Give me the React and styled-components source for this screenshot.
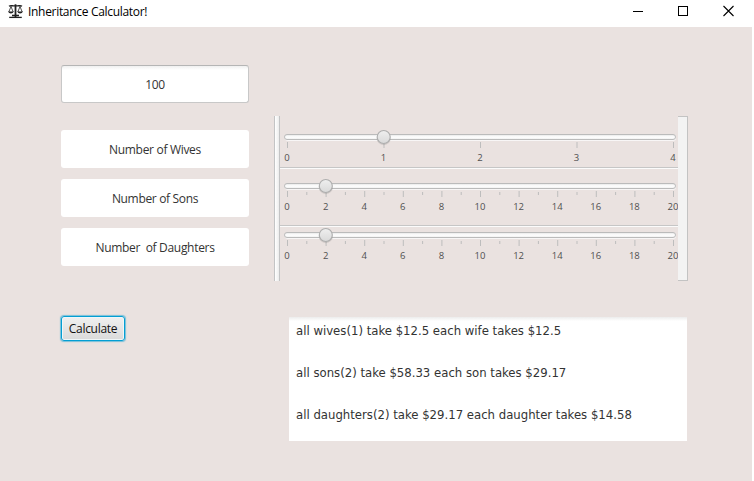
import React from 'react';
import styled, { createGlobalStyle, css } from 'styled-components';

const Global = createGlobalStyle`
  * { box-sizing: border-box; }
  html, body { margin: 0; padding: 0; background: #fff; overflow: hidden; }
`;

const Window = styled.div`
  width: 754px;
  height: 481px;
  display: flex;
  flex-direction: column;
  background: #fff;
  font-family: 'Open Sans', 'Noto Sans', sans-serif;
  font-size: 12px;
  color: #333;
`;

const TitleBar = styled.header`
  height: 27px;
  display: flex;
  align-items: flex-start;
  padding: 4px 20px 0 8px;
  color: #000;
`;

const Title = styled.span`
  margin-left: 5px;
  line-height: 16px;
  letter-spacing: ${(p) => p.$spacing}px;
  flex: 1;
  white-space: nowrap;
`;

const Controls = styled.div`
  display: flex;
  gap: 35px;
  padding-top: 1px;
  svg { display: block; }
`;

const Scene = styled.main`
  width: 752px;
  flex: 1;
  display: grid;
  grid-template-columns: 188px 414px;
  grid-template-rows: 51px 165px 1fr;
  column-gap: 25px;
  padding: 38px 0 0 61px;
  background: #eae2e0;
`;

const Field = styled.div`
  height: 38px;
  display: flex;
  align-items: center;
  justify-content: center;
  padding-top: 1px;
  border-radius: 3px;
  background: #fff;
  white-space: pre;
  letter-spacing: ${(p) => p.$spacing || 0}px;
  ${(p) =>
    p.$bordered &&
    css`
      border: 1px solid #c8c8c8;
      border-top-color: #b5b5b5;
      background: linear-gradient(#f0f0f0, #fff 4px);
    `}
`;

const FieldStack = styled.div`
  grid-column: 1;
  grid-row: 2;
  display: flex;
  flex-direction: column;
  gap: 11px;
  padding-top: 14px;
`;

const SplitPane = styled.section`
  grid-column: 2;
  grid-row: 2;
  display: flex;
  height: 165px;
`;

const LeftDivider = styled.div`
  width: 6px;
  border: solid #c3c4c5;
  border-width: 0 1px;
  background: linear-gradient(90deg, #fff, #ececec);
`;

const RightPanel = styled.div`
  width: 10px;
  border: 1px solid #c3c3c3;
  border-left: 0;
  background: #f3f3f3;
`;

const Sliders = styled.div`
  width: 398px;
  overflow: hidden;
`;

const SliderPane = styled.div`
  height: ${(p) => p.$height}px;
  padding: ${(p) => p.$top}px 0 0 4px;
`;

const PaneDivider = styled.div`
  height: 2px;
  background: #fbfbfb;
  border-top: 1px solid #c6c6c6;
`;

const SliderArt = styled.svg`
  display: block;
  width: 394px;
  height: 21px;
`;

const Labels = styled.div`
  display: flex;
  justify-content: space-between;
  width: 386px;
  margin-left: 3px;
  height: 15px;
  line-height: 15px;
  font-size: 9.5px;
  color: #505050;
`;

const Label = styled.span`
  width: 0;
  display: flex;
  justify-content: center;
`;

const Actions = styled.div`
  grid-column: 1;
  grid-row: 3;
  padding-top: 35px;
`;

const CalculateButton = styled.button`
  display: block;
  width: 64px;
  height: 25px;
  padding: 0;
  border: 1px solid #039ed3;
  border-radius: 3px;
  box-shadow: 0 0 1px 1px rgba(3, 158, 211, 0.5), inset 0 0 0 1px #f0f6f8;
  background: linear-gradient(#f0f0f0, #dadada);
  font: inherit;
  color: #111;
  letter-spacing: ${(p) => p.$spacing}px;
`;

const Output = styled.div`
  grid-column: 2;
  grid-row: 3;
  width: 398px;
  height: 124px;
  margin: 36px 0 0 15px;
  padding: 4px 7px;
  background: linear-gradient(#ececec, #fff 4px);
`;

const ResultLine = styled.p`
  margin: 0;
  height: 42px;
  line-height: 20px;
  white-space: nowrap;
  font-family: 'DejaVu Sans Condensed', 'DejaVu Sans', sans-serif;
  font-stretch: condensed;
  font-size: 13px;
`;

function ScalesIcon() {
  return (
    <svg width="15" height="16" viewBox="0 0 15 16" fill="none" stroke="#222" strokeWidth="1">
      <path d="M1 2.2 C3 .8 5 2.6 7.5 1.6 C10 2.6 12 .8 14 2.2" strokeWidth="1.4" />
      <path d="M7.5 0.3 V13" strokeWidth="1.8" />
      <path d="M3 2.5 L.8 8 M3 2.5 L5.2 8 M12 2.5 L9.8 8 M12 2.5 L14.2 8" strokeWidth=".8" />
      <path d="M0 7.6 H5.8 Q5 9.6 2.9 9.6 Q.8 9.6 0 7.6 Z M9.2 7.6 H15 Q14.2 9.6 12.1 9.6 Q10 9.6 9.2 7.6 Z" fill="#222" stroke="none" />
      <path d="M4 11.5 H11" strokeWidth="1.6" />
      <path d="M1.2 13.4 H13.8" strokeWidth="1.3" />
    </svg>
  );
}

function Slider({ id, value, max, minor, labels }) {
  const at = (v) => 3.5 + (v / max) * 386;
  const ticks = Array.from({ length: minor ? max + 1 : labels.length }, (_, i) => i);
  return (
    <>
      <SliderArt viewBox="0 0 394 21">
        <defs>
          <linearGradient id={`track-${id}`} x1="0" y1="0" x2="0" y2="1">
            <stop offset="0" stopColor="#e4e4e4" />
            <stop offset=".5" stopColor="#fff" />
            <stop offset="1" stopColor="#eee" />
          </linearGradient>
          <linearGradient id={`thumb-${id}`} x1="0" y1="0" x2="0" y2="1">
            <stop offset="0" stopColor="#efefef" />
            <stop offset="1" stopColor="#d9d9d9" />
          </linearGradient>
        </defs>
        {ticks.map((t) => {
          const small = minor && t % 2 === 1;
          return (
            <rect key={t} x={at(t) - 0.5} y={small ? 14 : 13} width="1" height={small ? 3 : 6} fill="#bdbdbd" />
          );
        })}
        <rect x="1" y="6" width="391" height="6" rx="3" fill="#f8f6f6" />
        <rect x=".5" y="5.5" width="391" height="5" rx="2.5" fill={`url(#track-${id})`} stroke="#bbb" />
        <circle cx={at(value) - 0.3} cy="9" r="7.2" fill="#000" opacity=".1" />
        <circle cx={at(value) - 0.3} cy="8" r="6.5" fill={`url(#thumb-${id})`} stroke="#aeaeae" strokeWidth="1.1" />
      </SliderArt>
      <Labels>
        {labels.map((l) => (
          <Label key={l}>{l}</Label>
        ))}
      </Labels>
    </>
  );
}

const evens = [0, 2, 4, 6, 8, 10, 12, 14, 16, 18, 20];

export default function App() {
  return (
    <Window>
      <Global />
      <TitleBar>
        <ScalesIcon />
        <Title $spacing={-0.31}>Inheritance Calculator!</Title>
        <Controls>
          <svg width="10" height="11"><path d="M0 6.5H10" stroke="#000" /></svg>
          <svg width="10" height="11"><rect x=".5" y="1.5" width="9" height="9" fill="none" stroke="#000" /></svg>
          <svg width="11" height="12"><path d="M.5 1L10.5 11M10.5 1L.5 11" stroke="#000" strokeWidth="1.1" /></svg>
        </Controls>
      </TitleBar>
      <Scene>
        <Field $bordered $spacing={-0.4}>100</Field>
        <FieldStack>
          <Field $spacing={-0.31}>Number of Wives</Field>
          <Field $spacing={-0.33}>Number of Sons</Field>
          <Field $spacing={-0.31}>{'Number  of Daughters'}</Field>
        </FieldStack>
        <SplitPane>
          <LeftDivider />
          <Sliders>
            <SliderPane $height={51} $top={13}>
              <Slider id="wives" value={1} max={4} labels={[0, 1, 2, 3, 4]} />
            </SliderPane>
            <PaneDivider />
            <SliderPane $height={56} $top={9}>
              <Slider id="sons" value={2} max={20} minor labels={evens} />
            </SliderPane>
            <PaneDivider />
            <SliderPane $height={54} $top={0}>
              <Slider id="daughters" value={2} max={20} minor labels={evens} />
            </SliderPane>
          </Sliders>
          <RightPanel />
        </SplitPane>
        <Actions>
          <CalculateButton $spacing={-0.3}>Calculate</CalculateButton>
        </Actions>
        <Output>
          <ResultLine>all wives(1) take $12.5 each wife takes $12.5</ResultLine>
          <ResultLine>all sons(2) take $58.33 each son takes $29.17</ResultLine>
          <ResultLine>all daughters(2) take $29.17 each daughter takes $14.58</ResultLine>
        </Output>
      </Scene>
    </Window>
  );
}
